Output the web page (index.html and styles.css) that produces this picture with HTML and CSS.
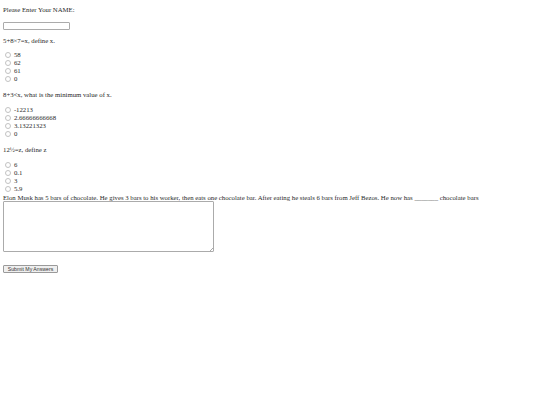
FILE: index.html
```html
<!DOCTYPE html>
<html>
<head>
<meta charset="utf-8">
<link rel="stylesheet" href="styles.css">
</head>
<body>
<p class="line">Please Enter Your NAME:</p>
<div class="field"><input type="text" class="name"></div>
<p class="line q1">5+8×7=x, define x.</p>
<div class="opts first">
<label><input type="radio" name="q1"> 58</label>
<label><input type="radio" name="q1"> 62</label>
<label><input type="radio" name="q1"> 61</label>
<label><input type="radio" name="q1"> 0</label>
</div>
<p class="line q">8+3&lt;x, what is the minimum value of x.</p>
<div class="opts">
<label><input type="radio" name="q2"> -12213</label>
<label><input type="radio" name="q2"> 2.66666666668</label>
<label><input type="radio" name="q2"> 3.13221323</label>
<label><input type="radio" name="q2"> 0</label>
</div>
<p class="line q">12½=z, define z</p>
<div class="opts">
<label><input type="radio" name="q3"> 6</label>
<label><input type="radio" name="q3"> 0.1</label>
<label><input type="radio" name="q3"> 3</label>
<label><input type="radio" name="q3"> 5.9</label>
</div>
<p class="essay">Elon Musk has 5 bars of chocolate. He gives 3 bars to his worker, then eats one chocolate bar. After eating he steals 6 bars from Jeff Bezos. He now has _______ chocolate bars</p>
<div class="area"><textarea class="answer"></textarea><span class="grip"></span></div>
<div class="actions"><button class="submit">Submit My Answers</button></div>
</body>
</html>
```
FILE: styles.css
```css
html {
  background: #fff;
}
body {
  margin: 0;
  padding: 6px 3px 0;
  font-family: "Liberation Serif", "Times New Roman", serif;
  font-size: 6.75px;
  line-height: 8px;
  color: #2a2a2a;
}
.line {
  margin: 0;
  height: 8px;
  white-space: nowrap;
}
.field {
  margin-top: 8px;
  height: 8px;
}
.name {
  display: block;
  box-sizing: border-box;
  width: 67px;
  height: 8px;
  margin: 0;
  padding: 0;
  border: 1px solid #ababab;
  border-radius: 1px;
  background: #fff;
  outline: none;
}
.q1 {
  margin-top: 7px;
}
.q {
  margin-top: 8px;
}
.opts {
  margin-top: 7px;
  display: flex;
  flex-direction: column;
}
.opts.first {
  margin-top: 6px;
}
.opts label {
  display: flex;
  align-items: center;
  height: 8px;
  white-space: pre;
}
.opts input {
  -webkit-appearance: none;
  appearance: none;
  box-sizing: border-box;
  width: 6px;
  height: 6px;
  margin: 0 1.2px 0 2px;
  border: 0.5px solid #c2c2c2;
  border-radius: 50%;
  background: #fff;
}
.essay {
  margin: 1px 0 0;
  line-height: 7px;
  height: 7px;
  white-space: nowrap;
}
.area {
  position: relative;
  width: 211px;
  height: 51px;
}
.answer {
  display: block;
  box-sizing: border-box;
  width: 211px;
  height: 51px;
  margin: 0;
  padding: 0;
  border: 1px solid #ababab;
  border-radius: 1px;
  resize: none;
  background: #fff;
  outline: none;
}
.grip {
  position: absolute;
  right: 1.5px;
  bottom: 1.5px;
  width: 3px;
  height: 3px;
  background: linear-gradient(135deg, transparent 45%, #aaa 45%, #aaa 55%, transparent 55%, transparent 70%, #aaa 70%, #aaa 80%, transparent 80%);
}
.actions {
  margin-top: 13px;
}
.submit {
  display: block;
  box-sizing: border-box;
  width: 55px;
  height: 8px;
  margin: 0;
  padding: 0;
  border: 0.6px solid #9a9a9a;
  border-radius: 1px;
  background: #efefef;
  font-family: "Liberation Sans", Arial, sans-serif;
  font-size: 5.2px;
  line-height: 6.5px;
  color: #333;
}
```
